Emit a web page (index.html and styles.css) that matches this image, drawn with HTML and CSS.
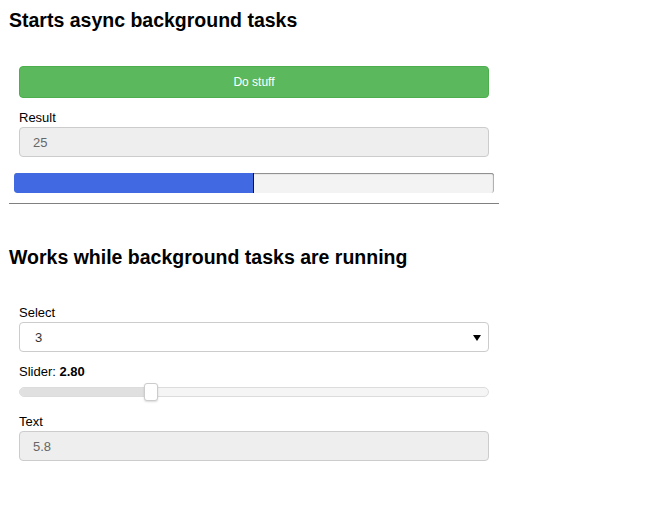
FILE: index.html
```html
<!DOCTYPE html>
<html>
<head>
<meta charset="utf-8">
<link rel="stylesheet" href="styles.css">
</head>
<body>
<div class="page">
  <h2 class="title">Starts async background tasks</h2>
  <div class="panel first">
    <div class="btn">Do stuff</div>
    <div class="label">Result</div>
    <div class="field readonly">25</div>
  </div>
  <div class="progress"><div class="progress-fill" style="width:50%"></div></div>
  <hr class="rule">
  <h2 class="title second">Works while background tasks are running</h2>
  <div class="panel second-panel">
    <div class="label">Select</div>
    <div class="field select"><span>3</span><span class="caret"></span></div>
    <div class="label slider-label">Slider: <b>2.80</b></div>
    <div class="slider">
      <div class="track"><div class="track-fill" style="width:131px"></div><div class="handle"></div></div>
    </div>
    <div class="label">Text</div>
    <div class="field readonly">5.8</div>
  </div>
</div>
</body>
</html>
```

FILE: styles.css
```css
html, body {
  margin: 0;
  padding: 0;
  background: #fff;
}
body {
  font-family: "Liberation Sans", Arial, sans-serif;
  color: #000;
}
.page {
  width: 490px;
  padding: 8px 0 0 9px;
}
.title {
  margin: 0;
  font-size: 19.5px;
  line-height: 24px;
  font-weight: bold;
  color: #000;
}
.title.second {
  margin-top: 41px;
}
.panel {
  padding: 0 10px;
  display: flex;
  flex-direction: column;
}
.panel.first {
  margin-top: 34px;
}
.second-panel {
  margin-top: 34px;
}
.btn {
  height: 30px;
  background: #5cb85c;
  border: 1px solid #4cae4c;
  border-radius: 4px;
  color: #fff;
  font-size: 12px;
  display: flex;
  align-items: center;
  justify-content: center;
  margin-bottom: 10px;
}
.label {
  font-size: 13px;
  line-height: 19px;
  color: #000;
}
.label b {
  font-weight: bold;
}
.field {
  box-sizing: border-box;
  height: 30px;
  border: 1px solid #ccc;
  border-radius: 4px;
  font-size: 13px;
  display: flex;
  align-items: center;
  padding-left: 13px;
}
.readonly {
  background: #eee;
  color: #666;
}
.select {
  background: #fff;
  color: #333;
  padding-left: 15px;
  padding-right: 7px;
  justify-content: space-between;
}
.caret {
  width: 0;
  height: 0;
  border-left: 4px solid transparent;
  border-right: 4px solid transparent;
  border-top: 6px solid #000;
  margin-top: 1px;
}
.slider-label {
  margin-top: 10px;
}
.slider {
  height: 31px;
  padding-top: 6px;
  box-sizing: border-box;
}
.track {
  position: relative;
  height: 10px;
  box-sizing: border-box;
  background: #f5f5f5;
  border: 1px solid #dcdcdc;
  border-radius: 5px;
}
.track-fill {
  height: 8px;
  background: #e0e0e0;
  border-radius: 4px 0 0 4px;
}
.handle {
  position: absolute;
  left: 124px;
  top: -5px;
  width: 14px;
  height: 18px;
  box-sizing: border-box;
  background: #fff;
  border: 1px solid #ccc;
  border-radius: 3px;
  box-shadow: 0 1px 2px rgba(0,0,0,0.15);
}
.progress {
  margin: 16px 5px 0 5px;
  height: 20px;
  background: #f3f3f3;
  border-radius: 3px;
  box-shadow: inset 0 2px 1px -1px rgba(0,0,0,0.45), inset -2px 0 1px -1px rgba(0,0,0,0.3);
  overflow: hidden;
  display: flex;
}
.progress-fill {
  height: 100%;
  background: #4169e1;
  border-right: 1px solid #101030;
  box-sizing: border-box;
  border-radius: 3px 0 0 3px;
}
.rule {
  margin: 10px 0 0 0;
  border: 0;
  border-top: 1px solid #808080;
  height: 0;
}
```
